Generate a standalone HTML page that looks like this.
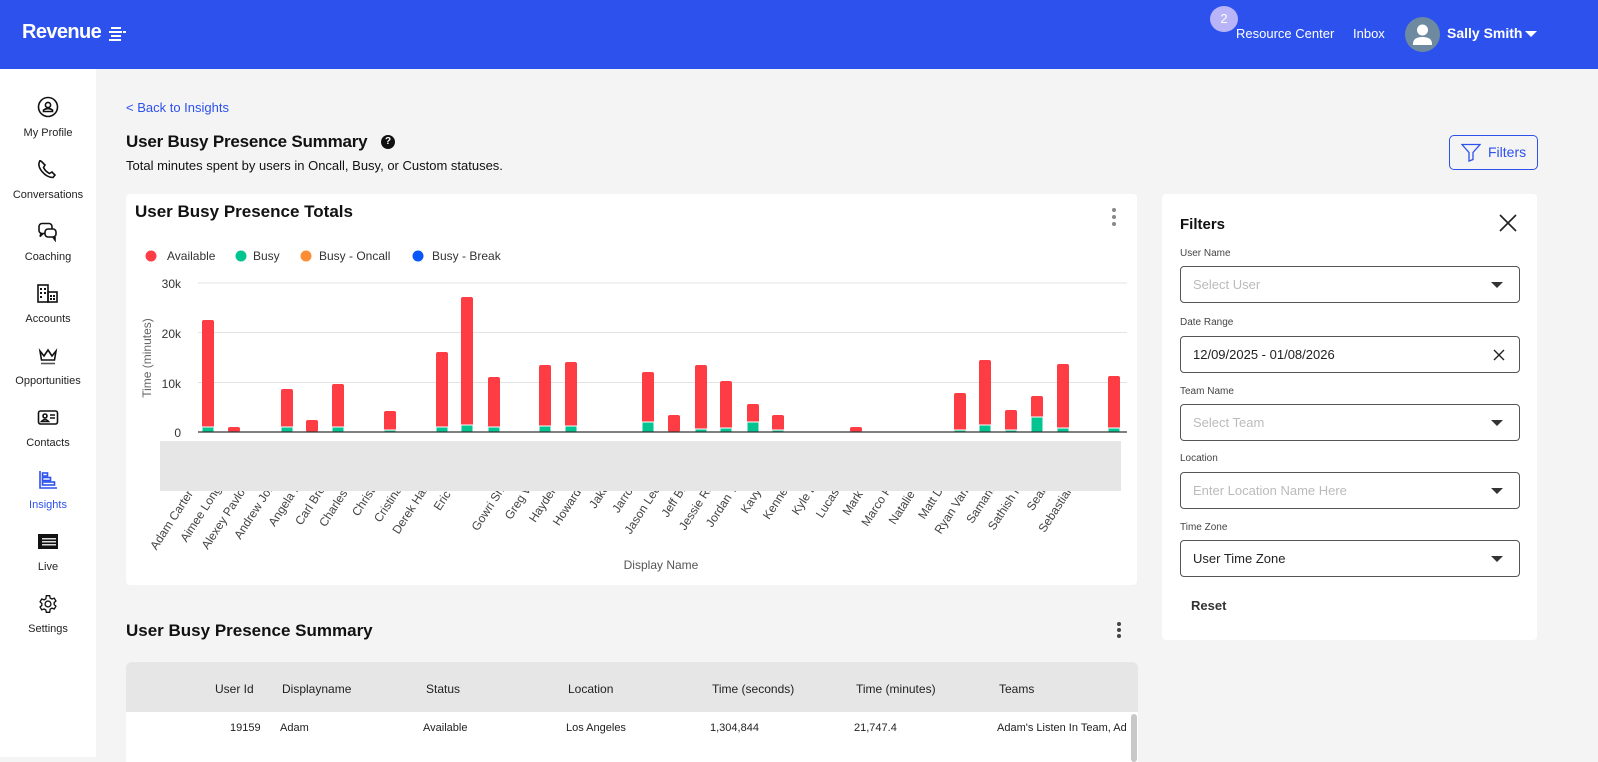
<!DOCTYPE html>
<html><head><meta charset="utf-8">
<style>
*{box-sizing:border-box;margin:0;padding:0}
body{width:1598px;height:757px;overflow:hidden;background:#f4f4f4;font-family:"Liberation Sans",sans-serif;color:#111;position:relative}
.top{position:absolute;left:0;top:0;width:1598px;height:69px;background:#2c51ec;color:#fff}
.abs{position:absolute}
.side{position:absolute;left:0;top:69px;width:96px;height:688px;background:#fff}
.nav{position:absolute;left:0;width:96px;text-align:center;font-size:11px;color:#222}
.nav svg{display:block;margin:0 auto 9px}
.card{position:absolute;background:#fff;border-radius:4px}
.lbl{position:absolute;left:18px;font-size:10px;color:#444}
.inp{position:absolute;left:18px;width:340px;height:37px;border:1px solid #555;border-radius:4px;font-size:13px;padding:10px 12px;color:#bbb}
.caret{position:absolute;right:16px;top:15px;width:0;height:0;border-left:6px solid transparent;border-right:6px solid transparent;border-top:6px solid #333}
.th{position:absolute;top:20px;font-size:12px;color:#222}
.td{position:absolute;top:60px;font-size:11px;color:#222}
</style></head><body>
<div class="top">
  <div class="abs" style="left:22px;top:21px;font-size:20px;font-weight:bold;letter-spacing:-0.6px">Revenue</div>
  <svg class="abs" style="left:109px;top:27px" width="17" height="15"><g fill="#fff"><rect x="2" y="0" width="10" height="2"/><rect x="0" y="4" width="13" height="2"/><rect x="14" y="4" width="3" height="2"/><rect x="2" y="8" width="10" height="2"/><rect x="0" y="12" width="12" height="2"/></g></svg>
  <div class="abs" style="left:1210px;top:6px;width:28px;height:26px;border-radius:50%;background:#b9b3f7;color:#fff;font-size:13px;text-align:center;line-height:26px">2</div>
  <div class="abs" style="left:1236px;top:26px;font-size:13px">Resource Center</div>
  <div class="abs" style="left:1353px;top:26px;font-size:13px">Inbox</div>
  <div class="abs" style="left:1405px;top:17px;width:35px;height:35px;border-radius:50%;background:#6d8aa0;overflow:hidden">
    <svg width="35" height="35"><circle cx="17.5" cy="13" r="5.5" fill="#fff"/><path d="M8 27 q0-7 9.5-7 q9.5 0 9.5 7 v1 h-19z" fill="#fff"/></svg></div>
  <div class="abs" style="left:1447px;top:25px;font-size:14px;font-weight:bold">Sally Smith</div>
  <div class="abs" style="left:1525px;top:31px;border-left:6px solid transparent;border-right:6px solid transparent;border-top:6px solid #fff"></div>
</div>

<div class="side">
  <div class="nav" style="top:27px"><svg width="22" height="22" viewBox="0 0 22 22" fill="none" stroke="#111" stroke-width="1.6"><circle cx="11" cy="11" r="9.5"/><circle cx="11" cy="9" r="2.6"/><path d="M6.5 15.5h9v-1.5q-4.5-3-9 0z"/></svg>My Profile</div>
  <div class="nav" style="top:91px"><svg width="22" height="20" viewBox="0 0 22 20" fill="none" stroke="#111" stroke-width="1.6"><path d="M5 2l3 3-1.5 2.5q2 4 6 6l2.5-1.5 3 3-2 2.5q-6 0-11-6t-2-11z"/></svg>Conversations</div>
  <div class="nav" style="top:153px"><svg width="22" height="20" viewBox="0 0 22 20" fill="none" stroke="#111" stroke-width="1.6"><rect x="2" y="1.5" width="13" height="10" rx="3"/><path d="M4 11.5l-1 3 3-3"/><rect x="8" y="7" width="11" height="8" rx="3" fill="#fff"/><path d="M16 15l2 3v-3"/></svg>Coaching</div>
  <div class="nav" style="top:215px"><svg width="22" height="20" viewBox="0 0 22 20" fill="none" stroke="#111" stroke-width="1.6"><rect x="1" y="1" width="10" height="17"/><rect x="11" y="8" width="9" height="10"/><g fill="#111" stroke="none"><rect x="3" y="4" width="2" height="2"/><rect x="7" y="4" width="2" height="2"/><rect x="3" y="8" width="2" height="2"/><rect x="7" y="8" width="2" height="2"/><rect x="3" y="12" width="2" height="2"/><rect x="13" y="11" width="2" height="2"/><rect x="16" y="11" width="2" height="2"/><rect x="13" y="14" width="2" height="2"/><rect x="16" y="14" width="2" height="2"/></g></svg>Accounts</div>
  <div class="nav" style="top:277px"><svg width="22" height="20" viewBox="0 0 22 20" fill="none" stroke="#111" stroke-width="1.6"><path d="M3 5l4 5 4-6 4 6 4-5-1.5 9h-13z"/><path d="M4 17.5h14" stroke="#555"/></svg>Opportunities</div>
  <div class="nav" style="top:339px"><svg width="22" height="20" viewBox="0 0 22 20" fill="none" stroke="#111" stroke-width="1.6"><rect x="1.5" y="3" width="19" height="13" rx="2"/><circle cx="8" cy="8" r="2"/><path d="M4.5 13.5q3.5-4 7 0z M13 7h5 M13 10h5"/></svg>Contacts</div>
  <div class="nav" style="top:401px;color:#2c51ec"><svg width="22" height="20" viewBox="0 0 22 20" fill="none" stroke="#2c51ec" stroke-width="1.6"><path d="M3 1v17h17"/><rect x="5.5" y="3" width="5" height="3"/><rect x="5.5" y="7.5" width="8" height="3"/><rect x="5.5" y="12" width="12" height="3"/></svg>Insights</div>
  <div class="nav" style="top:463px"><svg width="22" height="20" viewBox="0 0 22 20"><rect x="1" y="2" width="20" height="15" fill="#111"/><g fill="#ddd"><rect x="5" y="6" width="14" height="1.5"/><rect x="5" y="9" width="14" height="1.5"/><rect x="5" y="12" width="14" height="1.5"/></g></svg>Live</div>
  <div class="nav" style="top:525px"><svg width="22" height="20" viewBox="0 0 24 24" fill="none" stroke="#111" stroke-width="1.6"><circle cx="12" cy="12" r="3.5"/><path d="M10 2h4l.6 2.8 2.2 1.2 2.7-1 2 3.4-2.1 1.9v2.4l2.1 1.9-2 3.4-2.7-1-2.2 1.2L14 22h-4l-.6-2.8-2.2-1.2-2.7 1-2-3.4 2.1-1.9v-2.4L2.5 9.4l2-3.4 2.7 1 2.2-1.2z"/></svg>Settings</div>
</div>

<div class="abs" style="left:126px;top:100px;font-size:13px;color:#2c51ec">&lt; Back to Insights</div>
<div class="abs" style="left:126px;top:132px;font-size:17px;font-weight:bold;letter-spacing:-0.2px">User Busy Presence Summary</div>
<div class="abs" style="left:381px;top:135px;width:14px;height:14px;border-radius:50%;background:#111;color:#fff;font-size:10px;font-weight:bold;text-align:center;line-height:14px">?</div>
<div class="abs" style="left:126px;top:158px;font-size:13px">Total minutes spent by users in Oncall, Busy, or Custom statuses.</div>
<div class="abs" style="left:1449px;top:135px;width:89px;height:35px;border:1px solid #2c51ec;border-radius:5px;font-size:14px;color:#2c51ec;padding:8px 0 0 38px">Filters
  <svg class="abs" style="left:11px;top:7px" width="20" height="19" viewBox="0 0 20 19" fill="none" stroke="#2c51ec" stroke-width="1.3"><path d="M1 1.5h18l-7 8v7l-4 1.5v-8.5z"/></svg></div>

<div class="card" style="left:126px;top:194px;width:1011px;height:391px">
  <div class="abs" style="left:9px;top:8px;font-size:17px;font-weight:bold">User Busy Presence Totals</div>
  <div class="abs" style="left:986px;top:14px;width:4px"><div style="width:4px;height:4px;border-radius:50%;background:#888;margin-bottom:3px"></div><div style="width:4px;height:4px;border-radius:50%;background:#888;margin-bottom:3px"></div><div style="width:4px;height:4px;border-radius:50%;background:#888"></div></div>
</div>
<svg class="abs" style="left:0;top:0" width="1140" height="590" font-family="Liberation Sans, sans-serif">
  <g font-size="12" fill="#333">
    <circle cx="151" cy="256" r="5.5" fill="#fe3c44"/><text x="167" y="260">Available</text>
    <circle cx="241" cy="256" r="5.5" fill="#02c490"/><text x="253" y="260">Busy</text>
    <circle cx="306" cy="256" r="5.5" fill="#fc8d35"/><text x="319" y="260">Busy - Oncall</text>
    <circle cx="418" cy="256" r="5.5" fill="#0658fa"/><text x="432" y="260">Busy - Break</text>
  </g>
  <g stroke="#e3e3e3" stroke-width="1"><line x1="198" y1="283" x2="1127" y2="283"/><line x1="198" y1="332.5" x2="1127" y2="332.5"/><line x1="198" y1="382.5" x2="1127" y2="382.5"/></g>
  <g font-size="12" fill="#333" text-anchor="end"><text x="181" y="288">30k</text><text x="181" y="338">20k</text><text x="181" y="388">10k</text><text x="181" y="437">0</text></g>
  <text transform="translate(151,358) rotate(-90)" text-anchor="middle" font-size="12" fill="#666">Time (minutes)</text>
  <g fill="#fe3c44">
    <rect x="202" y="320" width="12" height="112" rx="2"/><rect x="228" y="427" width="12" height="5" rx="2"/><rect x="281" y="389" width="12" height="43" rx="2"/><rect x="306" y="420" width="12" height="12" rx="2"/><rect x="332" y="384" width="12" height="48" rx="2"/><rect x="384" y="411" width="12" height="21" rx="2"/><rect x="436" y="352" width="12" height="80" rx="2"/><rect x="461" y="297" width="12" height="135" rx="2"/><rect x="488" y="377" width="12" height="55" rx="2"/><rect x="539" y="365" width="12" height="67" rx="2"/><rect x="565" y="362" width="12" height="70" rx="2"/><rect x="642" y="372" width="12" height="60" rx="2"/><rect x="668" y="415" width="12" height="17" rx="2"/><rect x="695" y="365" width="12" height="67" rx="2"/><rect x="720" y="381" width="12" height="51" rx="2"/><rect x="747" y="404" width="12" height="28" rx="2"/><rect x="772" y="415" width="12" height="17" rx="2"/><rect x="850" y="427" width="12" height="5" rx="2"/><rect x="954" y="393" width="12" height="39" rx="2"/><rect x="979" y="360" width="12" height="72" rx="2"/><rect x="1005" y="410" width="12" height="22" rx="2"/><rect x="1031" y="396" width="12" height="36" rx="2"/><rect x="1057" y="364" width="12" height="68" rx="2"/><rect x="1108" y="376" width="12" height="56" rx="2"/>
  </g>
  <g fill="#02c490" stroke="#fff" stroke-width="1">
    <rect x="202" y="427" width="12" height="5"/><rect x="281" y="427" width="12" height="5"/><rect x="332" y="427" width="12" height="5"/><rect x="384" y="430" width="12" height="2"/><rect x="436" y="427" width="12" height="5"/><rect x="461" y="425" width="12" height="7"/><rect x="488" y="427" width="12" height="5"/><rect x="539" y="426" width="12" height="6"/><rect x="565" y="426" width="12" height="6"/><rect x="642" y="422" width="12" height="10"/><rect x="695" y="429" width="12" height="3"/><rect x="720" y="428" width="12" height="4"/><rect x="747" y="422" width="12" height="10"/><rect x="772" y="430" width="12" height="2"/><rect x="954" y="430" width="12" height="2"/><rect x="979" y="425" width="12" height="7"/><rect x="1005" y="430" width="12" height="2"/><rect x="1031" y="417" width="12" height="15"/><rect x="1057" y="428" width="12" height="4"/><rect x="1108" y="428" width="12" height="4"/>
  </g>
  <line x1="198" y1="432" x2="1127" y2="432" stroke="#333" stroke-width="1.2"/>
  <g font-size="12" fill="#444" text-anchor="end">
    <text transform="translate(212,465) rotate(-57)">Adam Carter Smith</text>
    <text transform="translate(237,465) rotate(-57)">Aimee Longwood</text>
    <text transform="translate(263,465) rotate(-57)">Alexey Pavlov Ivan</text>
    <text transform="translate(289,465) rotate(-57)">Andrew Johnson</text>
    <text transform="translate(315,465) rotate(-57)">Angela Martin</text>
    <text transform="translate(341,465) rotate(-57)">Carl Brown Jr</text>
    <text transform="translate(366,465) rotate(-57)">Charles Davis</text>
    <text transform="translate(392,465) rotate(-57)">Christopher</text>
    <text transform="translate(418,465) rotate(-57)">Cristina Ortiz</text>
    <text transform="translate(444,465) rotate(-57)">Derek Hale Lee</text>
    <text transform="translate(470,465) rotate(-57)">Eric Stone</text>
    <text transform="translate(521,465) rotate(-57)">Gowri Shankar</text>
    <text transform="translate(547,465) rotate(-57)">Greg Wilson</text>
    <text transform="translate(573,465) rotate(-57)">Hayden Cole</text>
    <text transform="translate(599,465) rotate(-57)">Howard Stern</text>
    <text transform="translate(624,465) rotate(-57)">Jake Paul</text>
    <text transform="translate(650,465) rotate(-57)">Jarrod Kim</text>
    <text transform="translate(676,465) rotate(-57)">Jason Lee Park</text>
    <text transform="translate(702,465) rotate(-57)">Jeff Bridges</text>
    <text transform="translate(728,465) rotate(-57)">Jessie Ray Mo</text>
    <text transform="translate(753,465) rotate(-57)">Jordan Tate Li</text>
    <text transform="translate(779,465) rotate(-57)">Kavya Rao</text>
    <text transform="translate(805,465) rotate(-57)">Kenneth Wu</text>
    <text transform="translate(831,465) rotate(-57)">Kyle Brown</text>
    <text transform="translate(857,465) rotate(-57)">Lucas Reed</text>
    <text transform="translate(882,465) rotate(-57)">Mark Twain</text>
    <text transform="translate(908,465) rotate(-57)">Marco Polo Jr</text>
    <text transform="translate(934,465) rotate(-57)">Natalie Wood</text>
    <text transform="translate(960,465) rotate(-57)">Matt Damon</text>
    <text transform="translate(986,465) rotate(-57)">Ryan Vance Ro</text>
    <text transform="translate(1011,465) rotate(-57)">Samantha Jo</text>
    <text transform="translate(1037,465) rotate(-57)">Sathish Kumar</text>
    <text transform="translate(1063,465) rotate(-57)">Sean Paul</text>
    <text transform="translate(1089,465) rotate(-57)">Sebastian Cole</text>
  </g>
  <rect x="160" y="441" width="961" height="50" fill="#e6e6e6"/>
  <text x="661" y="569" text-anchor="middle" font-size="12" fill="#555">Display Name</text>
</svg>

<div class="abs" style="left:126px;top:621px;font-size:17px;font-weight:bold">User Busy Presence Summary</div>
<div class="abs" style="left:1117px;top:622px;width:4px"><div style="width:4px;height:4px;border-radius:50%;background:#444;margin-bottom:2px"></div><div style="width:4px;height:4px;border-radius:50%;background:#444;margin-bottom:2px"></div><div style="width:4px;height:4px;border-radius:50%;background:#444"></div></div>

<div class="card" style="left:126px;top:662px;width:1012px;height:100px;background:#e6e6e6;border-radius:6px 6px 0 0;overflow:hidden">
  <div class="th" style="left:89px">User Id</div>
  <div class="th" style="left:156px">Displayname</div>
  <div class="th" style="left:300px">Status</div>
  <div class="th" style="left:442px">Location</div>
  <div class="th" style="left:586px">Time (seconds)</div>
  <div class="th" style="left:730px">Time (minutes)</div>
  <div class="th" style="left:873px">Teams</div>
  <div class="abs" style="left:0;top:50px;width:1012px;height:50px;background:#fff"></div>
  <div class="td" style="left:104px">19159</div>
  <div class="td" style="left:154px">Adam</div>
  <div class="td" style="left:297px">Available</div>
  <div class="td" style="left:440px">Los Angeles</div>
  <div class="td" style="left:584px">1,304,844</div>
  <div class="td" style="left:728px">21,747.4</div>
  <div class="td" style="left:871px;white-space:nowrap;width:135px;overflow:hidden">Adam's Listen In Team, Ad</div>
  <div class="abs" style="left:1005px;top:52px;width:6px;height:48px;background:#c8c8c8;border-radius:3px"></div>
</div>

<div class="card" style="left:1162px;top:194px;width:375px;height:446px">
  <div class="abs" style="left:18px;top:22px;font-size:15px;font-weight:bold">Filters</div>
  <svg class="abs" style="left:337px;top:20px" width="18" height="18" stroke="#222" stroke-width="1.6"><path d="M1 1L17 17M17 1L1 17"/></svg>
  <div class="lbl" style="top:54px">User Name</div>
  <div class="inp" style="top:72px">Select User<div class="caret"></div></div>
  <div class="lbl" style="top:123px">Date Range</div>
  <div class="inp" style="top:142px;color:#222">12/09/2025 - 01/08/2026<svg class="abs" style="right:14px;top:12px" width="12" height="12" stroke="#222" stroke-width="1.4"><path d="M1 1L11 11M11 1L1 11"/></svg></div>
  <div class="lbl" style="top:192px">Team Name</div>
  <div class="inp" style="top:210px">Select Team<div class="caret"></div></div>
  <div class="lbl" style="top:259px">Location</div>
  <div class="inp" style="top:278px">Enter Location Name Here<div class="caret"></div></div>
  <div class="lbl" style="top:328px">Time Zone</div>
  <div class="inp" style="top:346px;color:#222">User Time Zone<div class="caret"></div></div>
  <div class="abs" style="left:29px;top:404px;font-size:13px;font-weight:bold;color:#333">Reset</div>
</div>
</body></html>
